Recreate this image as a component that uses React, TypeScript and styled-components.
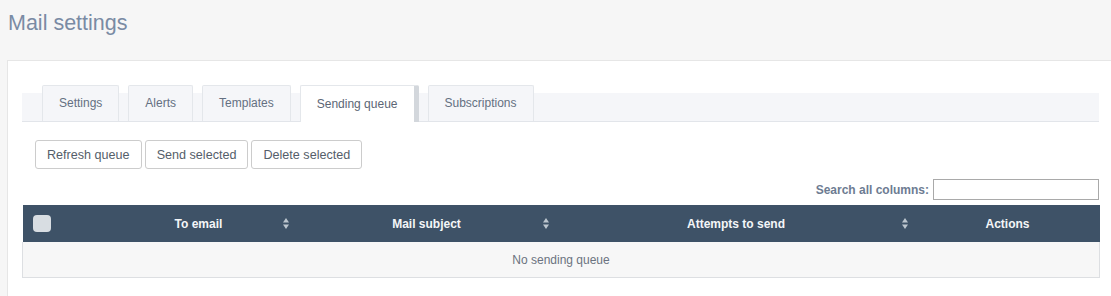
import styled, { createGlobalStyle } from "styled-components";

const GlobalStyle = createGlobalStyle`
    html, body {
        margin: 0;
        padding: 0;
        background: #f6f6f6;
        overflow: hidden;
    }
    body {
        font-family: "Liberation Sans", Arial, sans-serif;
    }
`;

const Page = styled.div`
    padding: 0 0 0 7px;
`;

const Title = styled.h1`
    margin: 0;
    height: 60px;
    padding: 11px 0 0 1px;
    box-sizing: border-box;
    font-size: 21.5px;
    font-weight: 400;
    color: #7a8ba4;
`;

const Panel = styled.div`
    background: #fff;
    border: 1px solid #e6e6e6;
    border-right: none;
    padding: 24px 12px 40px 14px;
    min-height: 200px;
`;

const TabStrip = styled.div`
    display: flex;
    gap: 9px;
    padding-left: 20px;
    height: 37px;
    box-sizing: border-box;
    background: linear-gradient(to bottom, #fff 8px, #f5f6f9 8px);
    border-bottom: 1px solid #e2e5ea;
`;

const Tab = styled.div<{ active?: boolean }>`
    display: flex;
    align-items: center;
    box-sizing: border-box;
    padding: 0 16px 1px;
    font-size: 12px;
    color: ${({ active }) => (active ? "#5c6675" : "#647081")};
    background: ${({ active }) => (active ? "#fff" : "#f5f6f9")};
    border: 1px solid #e4e7eb;
    border-bottom: none;
    border-right: ${({ active }) => (active ? "5px solid #d3d7dc" : "1px solid #e4e7eb")};
    border-radius: 2px 2px 0 0;
    margin-bottom: ${({ active }) => (active ? "-1px" : "0")};
    height: ${({ active }) => (active ? "37px" : "36px")};
`;

const Toolbar = styled.div`
    display: flex;
    gap: 3px;
    padding: 18px 0 0 13px;
`;

const Button = styled.button`
    height: 29px;
    padding: 0 11px;
    background: #fff;
    border: 1px solid #ccc;
    border-radius: 3px;
    font-family: "Liberation Sans", Arial, sans-serif;
    font-size: 12.6px;
    color: #555e6a;
    cursor: pointer;
`;

const SearchRow = styled.div`
    display: flex;
    justify-content: flex-end;
    align-items: center;
    gap: 4px;
    margin-top: 10px;
    height: 21px;
`;

const SearchLabel = styled.label`
    font-size: 12px;
    font-weight: 700;
    color: #6d7c92;
`;

const SearchInput = styled.input`
    width: 166px;
    height: 21px;
    box-sizing: border-box;
    border: 1px solid #a9a9a9;
    padding: 0 3px;
`;

const Table = styled.table`
    width: 100%;
    margin-top: 5px;
    border-collapse: collapse;
    table-layout: fixed;
    font-size: 12px;
`;

const HeadCell = styled.th<{ width: number }>`
    width: ${({ width }) => width}px;
    height: 37px;
    padding: 0;
    background: #3e5267;
    color: #f4f6f8;
    font-weight: 700;
    text-align: center;
    position: relative;
`;

const SortIcon = styled.svg`
    position: absolute;
    right: 8px;
    top: 13px;
`;

const CheckBox = styled.div`
    width: 18px;
    height: 17px;
    margin-left: 10px;
    border-radius: 4px;
    background: #d8dde2;
`;

const EmptyCell = styled.td`
    height: 35px;
    padding: 0;
    background: #f7f7f7;
    border: 1px solid #dddfe2;
    border-top: none;
    text-align: center;
    color: #6b7380;
`;

function Sort() {
    return (
        <SortIcon width="6" height="11" viewBox="0 0 6 11">
            <path d="M3 0 L6 4.5 L0 4.5 Z" fill="#bcc5ce" />
            <path d="M0 6.5 L6 6.5 L3 11 Z" fill="#bcc5ce" />
        </SortIcon>
    );
}

const tabs = ["Settings", "Alerts", "Templates", "Sending queue", "Subscriptions"];

const columns = [
    { title: "", width: 78, sortable: false },
    { title: "To email", width: 196, sortable: true },
    { title: "Mail subject", width: 260, sortable: true },
    { title: "Attempts to send", width: 359, sortable: true },
    { title: "Actions", width: 184, sortable: false },
];

export default function App() {
    return (
        <Page>
            <GlobalStyle />
            <Title>Mail settings</Title>
            <Panel>
                <TabStrip>
                    {tabs.map((t) => (
                        <Tab key={t} active={t === "Sending queue"}>{t}</Tab>
                    ))}
                </TabStrip>
                <Toolbar>
                    <Button>Refresh queue</Button>
                    <Button>Send selected</Button>
                    <Button>Delete selected</Button>
                </Toolbar>
                <SearchRow>
                    <SearchLabel>Search all columns:</SearchLabel>
                    <SearchInput />
                </SearchRow>
                <Table>
                    <thead>
                        <tr>
                            {columns.map((c, i) => (
                                <HeadCell key={i} width={c.width}>
                                    {i === 0 ? <CheckBox /> : c.title}
                                    {c.sortable && <Sort />}
                                </HeadCell>
                            ))}
                        </tr>
                    </thead>
                    <tbody>
                        <tr>
                            <EmptyCell colSpan={5}>No sending queue</EmptyCell>
                        </tr>
                    </tbody>
                </Table>
            </Panel>
        </Page>
    );
}
